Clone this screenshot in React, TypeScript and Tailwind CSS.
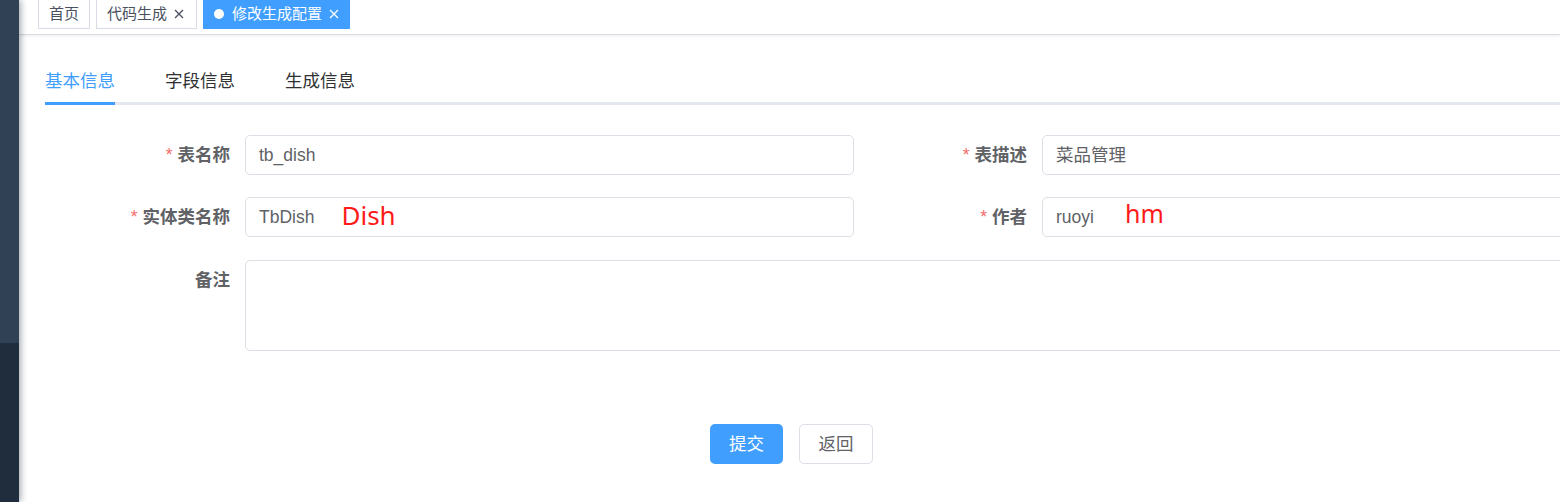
import React from "react";

const CN = '"Liberation Sans","Noto Sans CJK SC",sans-serif';

function CloseX({ color }: { color: string }) {
  return (
    <svg width="12" height="12" viewBox="0 0 12 12" className="ml-[6px]">
      <path d="M2 2 L10 10 M10 2 L2 10" stroke={color} strokeWidth="1.3" fill="none" />
    </svg>
  );
}

function Label({ text, required }: { text: string; required?: boolean }) {
  return (
    <div className="w-[188px] shrink-0 pr-[15px] text-right h-[40px] leading-[40px] text-[17.5px] font-bold text-[#606266]">
      {required && <span className="text-[#f56c6c] mr-[5px] font-normal">*</span>}
      {text}
    </div>
  );
}

function Input({ value, width, extra }: { value: string; width: string; extra?: React.ReactNode }) {
  return (
    <div
      className={`${width} h-[40px] shrink-0 border border-[#dcdfe6] rounded-[5px] px-[13px] flex items-center text-[17.5px] text-[#606266]`}
    >
      <span>{value}</span>
      {extra}
    </div>
  );
}

export default function App() {
  return (
    <div className="flex h-[502px] w-[1560px] overflow-hidden bg-white" style={{ fontFamily: CN }}>
      <div className="w-[19px] shrink-0 flex flex-col relative z-10 shadow-[2px_0_6px_rgba(0,21,41,0.35)]">
        <div className="h-[343px] bg-[#304156]" />
        <div className="flex-1 bg-[#1f2d3d]" />
      </div>
      <div className="flex-1 min-w-0 flex flex-col">
        <div className="h-[35px] shrink-0 border-b border-[#d8dce5] shadow-[0_1px_3px_rgba(0,0,0,0.08)] flex items-start pl-[19px] gap-[6px]">
          <div className="h-[30px] mt-[-1px] border border-[#d8dce5] px-[10px] flex items-center text-[15px] text-[#495060] bg-white">
            首页
          </div>
          <div className="h-[30px] mt-[-1px] border border-[#d8dce5] pl-[10px] pr-[11px] flex items-center text-[15px] text-[#495060] bg-white">
            代码生成
            <CloseX color="#495060" />
          </div>
          <div className="h-[30px] mt-[-1px] border border-[#409eff] pl-[10px] pr-[9px] flex items-center text-[15px] text-white bg-[#409eff]">
            <span className="w-[10px] h-[10px] rounded-full bg-white mr-[8px]" />
            修改生成配置
            <CloseX color="#ffffff" />
          </div>
        </div>

        <div className="pl-[26px] pt-[23px]">
          <div className="flex border-b-[3px] border-[#e4e7ed]">
            <div className="relative h-[44px] leading-[46px] text-[17.5px] text-[#409eff]">
              基本信息
              <div className="absolute left-0 right-0 bottom-[-3px] h-[3px] bg-[#409eff]" />
            </div>
            <div className="h-[44px] leading-[46px] text-[17.5px] text-[#303133] ml-[50px]">字段信息</div>
            <div className="h-[44px] leading-[46px] text-[17.5px] text-[#303133] ml-[50px]">生成信息</div>
          </div>
        </div>

        <div className="pl-[38px] pt-[30px]">
          <div className="flex w-[1594px]">
            <div className="w-[797px] flex">
              <Label text="表名称" required />
              <Input value="tb_dish" width="w-[609px]" />
            </div>
            <div className="w-[797px] flex">
              <Label text="表描述" required />
              <Input value="菜品管理" width="w-[609px]" />
            </div>
          </div>
          <div className="flex w-[1594px] mt-[22px]">
            <div className="w-[797px] flex">
              <Label text="实体类名称" required />
              <Input
                value="TbDish"
                width="w-[609px]"
                extra={
                  <span
                    className="ml-[27px] text-[26px] leading-none text-[#ff1a1a] -mt-[4px]"
                    style={{ fontFamily: '"Noto Sans",sans-serif' }}
                  >
                    Dish
                  </span>
                }
              />
            </div>
            <div className="w-[797px] flex">
              <Label text="作者" required />
              <Input
                value="ruoyi"
                width="w-[609px]"
                extra={
                  <span
                    className="ml-[31px] text-[25px] leading-none text-[#ff1a1a] -mt-[8px]"
                    style={{ fontFamily: '"Noto Sans",sans-serif' }}
                  >
                    hm
                  </span>
                }
              />
            </div>
          </div>
          <div className="flex w-[1594px] mt-[23px]">
            <Label text="备注" />
            <div className="w-[1406px] h-[91px] border border-[#dcdfe6] rounded-[5px]" />
          </div>
        </div>

        <div className="w-[1547px] -ml-px flex justify-center gap-[16px] mt-[73px]">
          <div className="w-[73px] h-[40px] rounded-[5px] bg-[#409eff] text-white text-[17.5px] flex items-center justify-center">
            提交
          </div>
          <div className="w-[74px] h-[40px] rounded-[5px] border border-[#dcdfe6] bg-white text-[#606266] text-[17.5px] flex items-center justify-center">
            返回
          </div>
        </div>
      </div>
    </div>
  );
}
